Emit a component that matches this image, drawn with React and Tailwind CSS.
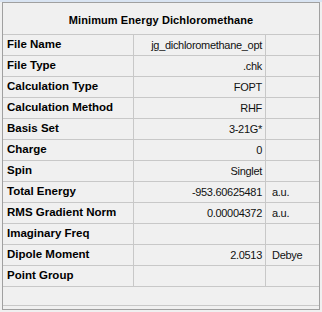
import React from "react";

const rows = [
    { label: "File Name", value: "jg_dichloromethane_opt", unit: "" },
    { label: "File Type", value: ".chk", unit: "" },
    { label: "Calculation Type", value: "FOPT", unit: "" },
    { label: "Calculation Method", value: "RHF", unit: "" },
    { label: "Basis Set", value: "3-21G*", unit: "" },
    { label: "Charge", value: "0", unit: "" },
    { label: "Spin", value: "Singlet", unit: "" },
    { label: "Total Energy", value: "-953.60625481", unit: "a.u." },
    { label: "RMS Gradient Norm", value: "0.00004372", unit: "a.u." },
    { label: "Imaginary Freq", value: "", unit: "" },
    { label: "Dipole Moment", value: "2.0513", unit: "Debye" },
    { label: "Point Group", value: "", unit: "" },
];

export default function App() {
    return (
        <div className="w-[322px] h-[312px] bg-[#f0f0f0] font-['Liberation_Sans',Arial,sans-serif] text-black">
            <div className="h-[2px] bg-[#d9e4f2]" />
            <div className="ml-[2px] w-[318px] h-[308px] border border-[#a0a0a0] flex flex-col">
                <div className="h-[32px] shrink-0 border-b border-[#c8c8c8] flex items-center justify-center pt-[3px]">
                    <span className="text-[11px] font-bold tracking-[0.1px]">Minimum Energy Dichloromethane</span>
                </div>
                {rows.map((row) => (
                    <div key={row.label} className="h-[21px] shrink-0 border-b border-[#c8c8c8] flex">
                        <div className="w-[131px] border-r border-[#c8c8c8] flex items-center pl-[4px] text-[11.5px] font-bold">
                            {row.label}
                        </div>
                        <div className="w-[132px] border-r border-[#c8c8c8] flex items-center justify-end pr-[3px] text-[11px] tracking-[-0.3px] text-[#111]">
                            {row.value}
                        </div>
                        <div className="flex-1 flex items-center pl-[6px] text-[11px] tracking-[-0.3px] text-[#111]">
                            {row.unit}
                        </div>
                    </div>
                ))}
                <div className="h-[19px] shrink-0 border-b border-[#c8c8c8]" />
            </div>
        </div>
    );
}
